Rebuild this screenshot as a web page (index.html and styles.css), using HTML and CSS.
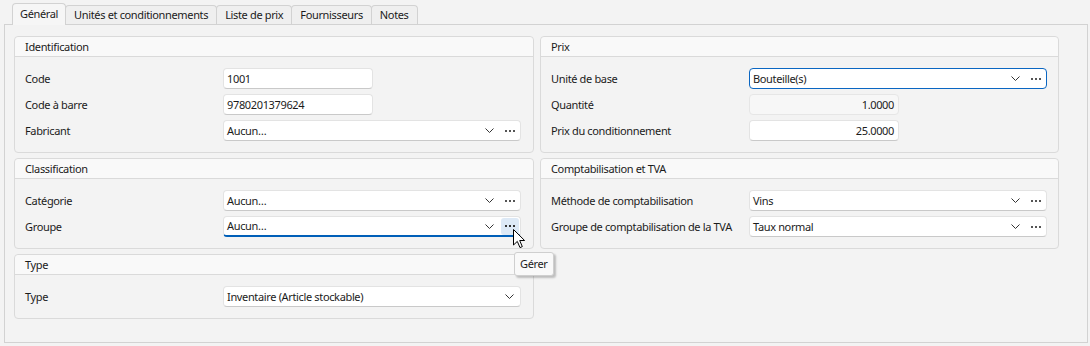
FILE: index.html
```html
<!DOCTYPE html>
<html lang="fr">
<head>
    <meta charset="UTF-8">
    <title>Article</title>
    <link rel="stylesheet" href="styles.css">
</head>
<body>
    <div class="tabs">
        <div class="tab active">Général</div>
        <div class="tab">Unités et conditionnements</div>
        <div class="tab">Liste de prix</div>
        <div class="tab">Fournisseurs</div>
        <div class="tab">Notes</div>
    </div>
    <div class="pane">
        <div class="grid">
            <section class="group">
                <div class="group-head">Identification</div>
                <div class="group-body">
                    <span class="lbl">Code</span>
                    <div class="field short">1001</div>
                    <span class="lbl">Code à barre</span>
                    <div class="field short">9780201379624</div>
                    <span class="lbl">Fabricant</span>
                    <div class="field combo">
                        <span class="val">Aucun…</span>
                        <span class="chev"><svg width="9" height="5" viewBox="0 0 9 5"><path d="M0.5 0.5 L4.5 4.5 L8.5 0.5" fill="none" stroke="#333" stroke-width="1"/></svg></span>
                        <span class="dots"><svg width="10" height="2" viewBox="0 0 10 2"><rect x="0" y="0" width="2" height="2"/><rect x="4" y="0" width="2" height="2"/><rect x="8" y="0" width="2" height="2"/></svg></span>
                    </div>
                </div>
            </section>

            <section class="group">
                <div class="group-head">Prix</div>
                <div class="group-body">
                    <span class="lbl">Unité de base</span>
                    <div class="field combo focus">
                        <span class="val">Bouteille(s)</span>
                        <span class="chev"><svg width="9" height="5" viewBox="0 0 9 5"><path d="M0.5 0.5 L4.5 4.5 L8.5 0.5" fill="none" stroke="#333" stroke-width="1"/></svg></span>
                        <span class="dots"><svg width="10" height="2" viewBox="0 0 10 2"><rect x="0" y="0" width="2" height="2"/><rect x="4" y="0" width="2" height="2"/><rect x="8" y="0" width="2" height="2"/></svg></span>
                    </div>
                    <span class="lbl">Quantité</span>
                    <div class="field short num disabled">1.0000</div>
                    <span class="lbl">Prix du conditionnement</span>
                    <div class="field short num">25.0000</div>
                </div>
            </section>

            <section class="group">
                <div class="group-head">Classification</div>
                <div class="group-body">
                    <span class="lbl">Catégorie</span>
                    <div class="field combo">
                        <span class="val">Aucun…</span>
                        <span class="chev"><svg width="9" height="5" viewBox="0 0 9 5"><path d="M0.5 0.5 L4.5 4.5 L8.5 0.5" fill="none" stroke="#333" stroke-width="1"/></svg></span>
                        <span class="dots"><svg width="10" height="2" viewBox="0 0 10 2"><rect x="0" y="0" width="2" height="2"/><rect x="4" y="0" width="2" height="2"/><rect x="8" y="0" width="2" height="2"/></svg></span>
                    </div>
                    <span class="lbl">Groupe</span>
                    <div class="field combo active-line">
                        <span class="val">Aucun…</span>
                        <span class="chev"><svg width="9" height="5" viewBox="0 0 9 5"><path d="M0.5 0.5 L4.5 4.5 L8.5 0.5" fill="none" stroke="#333" stroke-width="1"/></svg></span>
                        <span class="dots hover"><svg width="10" height="2" viewBox="0 0 10 2"><rect x="0" y="0" width="2" height="2"/><rect x="4" y="0" width="2" height="2"/><rect x="8" y="0" width="2" height="2"/></svg></span>
                    </div>
                </div>
            </section>

            <section class="group">
                <div class="group-head">Comptabilisation et TVA</div>
                <div class="group-body">
                    <span class="lbl">Méthode de comptabilisation</span>
                    <div class="field combo">
                        <span class="val">Vins</span>
                        <span class="chev"><svg width="9" height="5" viewBox="0 0 9 5"><path d="M0.5 0.5 L4.5 4.5 L8.5 0.5" fill="none" stroke="#333" stroke-width="1"/></svg></span>
                        <span class="dots"><svg width="10" height="2" viewBox="0 0 10 2"><rect x="0" y="0" width="2" height="2"/><rect x="4" y="0" width="2" height="2"/><rect x="8" y="0" width="2" height="2"/></svg></span>
                    </div>
                    <span class="lbl">Groupe de comptabilisation de la TVA</span>
                    <div class="field combo">
                        <span class="val">Taux normal</span>
                        <span class="chev"><svg width="9" height="5" viewBox="0 0 9 5"><path d="M0.5 0.5 L4.5 4.5 L8.5 0.5" fill="none" stroke="#333" stroke-width="1"/></svg></span>
                        <span class="dots"><svg width="10" height="2" viewBox="0 0 10 2"><rect x="0" y="0" width="2" height="2"/><rect x="4" y="0" width="2" height="2"/><rect x="8" y="0" width="2" height="2"/></svg></span>
                    </div>
                </div>
            </section>

            <section class="group">
                <div class="group-head">Type</div>
                <div class="group-body">
                    <span class="lbl">Type</span>
                    <div class="field combo no-dots">
                        <span class="val">Inventaire (Article stockable)</span>
                        <span class="chev"><svg width="9" height="5" viewBox="0 0 9 5"><path d="M0.5 0.5 L4.5 4.5 L8.5 0.5" fill="none" stroke="#333" stroke-width="1"/></svg></span>
                    </div>
                </div>
            </section>
        </div>
    </div>

    <!-- infobulle du bouton survolé -->
    <div class="tooltip">Gérer</div>
    <svg class="cursor" width="13" height="20" viewBox="0 0 13 20">
        <path d="M0.5 0.5 L0.5 16 L4.3 12.4 L7 18.6 L9.3 17.6 L6.7 11.5 L11.6 11.5 Z" fill="#fff" stroke="#000" stroke-width="1" stroke-linejoin="round"/>
    </svg>
</body>
</html>
```

FILE: styles.css
```css
*{
    box-sizing: border-box;
}
body{
    margin: 0;
    width: 1090px;
    height: 346px;
    overflow: hidden;
    position: relative;
    background-color: #f3f3f3;
    color: #1b1b1b;
    font-family: "Segoe UI", "Noto Sans", sans-serif;
    font-size: 11px;
    letter-spacing: -0.35px;
}
.tabs{
    display: flex;
    align-items: flex-end;
    height: 24px;
    padding-left: 12px;
    position: relative;
    z-index: 1;
}
.tab{
    height: 19px;
    line-height: 17px;
    padding: 0 8px;
    margin-left: -1px;
    border: 1px solid #d2d2d2;
    border-bottom: none;
    border-radius: 4px 4px 0 0;
    background-color: #efefef;
    white-space: nowrap;
}
.tab.active{
    height: 22px;
    line-height: 19px;
    margin-bottom: -1px;
    margin-left: 0;
    padding: 0 7px;
    background-color: #f6f6f6;
    position: relative;
    z-index: 2;
}
.pane{
    margin-left: 4px;
    width: 1084px;
    height: 319px;
    border: 1px solid #d2d2d2;
    padding: 11px 9px;
}
.grid{
    display: grid;
    grid-template-columns: 520px 519px;
    column-gap: 6px;
    row-gap: 5px;
    align-items: start;
}
.group{
    border: 1px solid #dadada;
    border-radius: 4px;
}
.group-head{
    height: 20px;
    line-height: 19px;
    padding-left: 10px;
    background-color: #f9f9f9;
    border-bottom: 1px solid #dadada;
    border-radius: 4px 4px 0 0;
}
.group-body{
    display: grid;
    grid-template-columns: 198px 1fr;
    row-gap: 5px;
    align-items: center;
    padding: 11px 11px 11px 10px;
}
.lbl{
    white-space: nowrap;
}
.field{
    height: 21px;
    line-height: 19px;
    padding: 0 3px;
    background-color: #fff;
    border: 1px solid #e3e3e3;
    border-bottom-color: #c9c9c9;
    border-radius: 4px;
    white-space: nowrap;
}
.short{
    width: 150px;
}
.num{
    text-align: right;
    padding-right: 4px;
}
.disabled{
    background-color: #f7f7f7;
    border-color: #e6e6e6;
}
.combo{
    width: 298px;
    display: flex;
    align-items: center;
    padding-right: 1px;
}
.combo .val{
    flex: 1;
}
.chev{
    width: 16px;
    height: 17px;
    margin-right: 4px;
    display: flex;
    justify-content: center;
    align-items: center;
}
.no-dots .chev{
    margin-right: 2px;
}
.dots{
    width: 18px;
    height: 17px;
    border-radius: 3px;
    display: flex;
    justify-content: center;
    align-items: center;
    fill: #555;
}
.dots.hover{
    background-color: #dde9f6;
    fill: #333;
}
.focus{
    border-color: #0a66c2;
}
.active-line{
    border-bottom: 2px solid #005fb8;
    line-height: 18px;
}
.tooltip{
    position: absolute;
    left: 514px;
    top: 252px;
    height: 24px;
    line-height: 21px;
    padding: 0 5px;
    background-color: #f9f9f9;
    border: 1px solid #cfcfcf;
    border-radius: 3px;
    box-shadow: 2px 2px 2px rgba(0, 0, 0, 0.22);
}
.cursor{
    position: absolute;
    left: 513px;
    top: 229px;
}
```
